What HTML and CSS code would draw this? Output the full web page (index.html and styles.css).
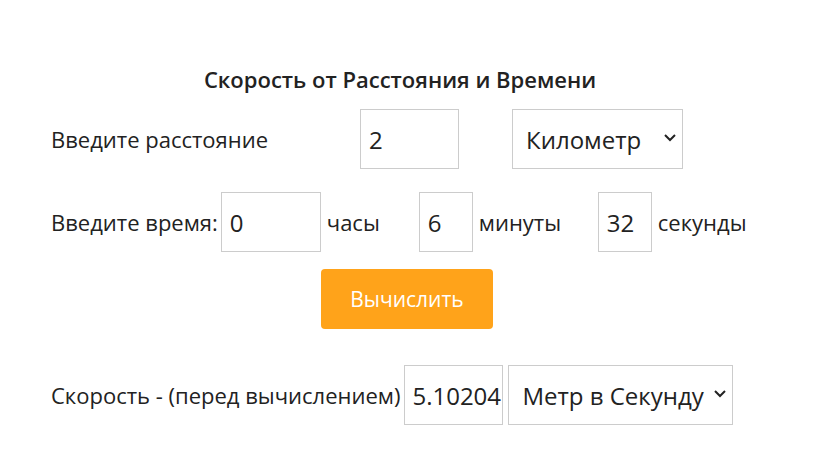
FILE: index.html
```html
<!DOCTYPE html>
<html lang="ru">
<head>
<meta charset="utf-8">
<link rel="stylesheet" href="styles.css">
</head>
<body>
<div class="calc">
  <h2 class="title">Скорость от Расстояния и Времени</h2>
  <div class="row row-dist">
    <span class="label label-dist">Введите расстояние</span>
    <input class="field w99" type="text" value="2">
    <div class="select-wrap sel-km">
      <select class="select"><option>Километр</option></select>
      <svg class="chev" width="14" height="9" viewBox="0 0 14 9"><path d="M2 2l5 5 5-5" fill="none" stroke="#222" stroke-width="2"/></svg>
    </div>
  </div>
  <div class="row row-time">
    <span class="label">Введите время:</span>
    <input class="field w100 ml3" type="text" value="0">
    <span class="unit u-h">часы</span>
    <input class="field w54" type="text" value="6">
    <span class="unit u-m">минуты</span>
    <input class="field w54" type="text" value="32">
    <span class="unit">секунды</span>
  </div>
  <div class="row row-btn">
    <button class="btn">Вычислить</button>
  </div>
  <div class="row row-res">
    <span class="label">Скорость - (перед вычислением)</span>
    <input class="field w99 ml4 res" type="text" value="5.10204">
    <div class="select-wrap sel-ms">
      <select class="select"><option>Метр в Секунду</option></select>
      <svg class="chev" width="14" height="9" viewBox="0 0 14 9"><path d="M2 2l5 5 5-5" fill="none" stroke="#222" stroke-width="2"/></svg>
    </div>
  </div>
</div>
</body>
</html>
```
FILE: styles.css
```css
html, body {
  margin: 0;
  padding: 0;
  background: #fff;
}
body {
  font-family: "Open Sans", "Noto Sans", sans-serif;
  color: #222;
}
.calc {
  width: 828px;
  padding: 64px 0 0 51px;
  box-sizing: border-box;
}
.title {
  margin: 0;
  width: 698px;
  text-align: center;
  font-size: 22px;
  font-weight: 600;
  line-height: 30px;
  color: #222;
}
.row {
  display: flex;
  align-items: center;
}
.row-dist { margin-top: 15px; }
.row-time { margin-top: 23px; }
.row-btn { margin-top: 17px; padding-left: 270px; }
.row-res { margin-top: 36px; }
.label {
  font-size: 22px;
  line-height: 30px;
  white-space: nowrap;
}
.label-dist { width: 309px; }
.field {
  box-sizing: border-box;
  height: 60px;
  border: 1px solid #ccc;
  padding: 0 0 0 8px;
  font-family: inherit;
  font-size: 24px;
  color: #222;
  background: #fff;
  outline: none;
  margin: 0;
}
.w99 { width: 99px; }
.w100 { width: 100px; }
.w54 { width: 54px; }
.ml3 { margin-left: 3px; }
.ml4 { margin-left: 4px; }
.res { padding-left: 7px; padding-right: 0; }
.unit {
  font-size: 22px;
  line-height: 30px;
  margin-left: 6px;
}
.u-h { width: 92px; }
.u-m { width: 119px; }
.select-wrap {
  position: relative;
  margin-left: 53px;
}
.sel-km .select { width: 171px; }
.sel-ms { margin-left: 5px; }
.sel-ms .select { width: 225px; }
.select {
  -webkit-appearance: none;
  appearance: none;
  box-sizing: border-box;
  height: 60px;
  border: 1px solid #ccc;
  border-radius: 0;
  background: #fff;
  padding: 0 0 0 13px;
  font-family: inherit;
  font-size: 24px;
  color: #222;
  margin: 0;
  display: block;
}
.chev {
  position: absolute;
  right: 6px;
  top: 24px;
  pointer-events: none;
}
.btn {
  box-sizing: border-box;
  width: 172px;
  height: 60px;
  border: none;
  border-radius: 4px;
  background: #ffa31a;
  color: #fff;
  font-family: inherit;
  font-size: 21px;
  padding: 0;
  margin: 0;
}
```
